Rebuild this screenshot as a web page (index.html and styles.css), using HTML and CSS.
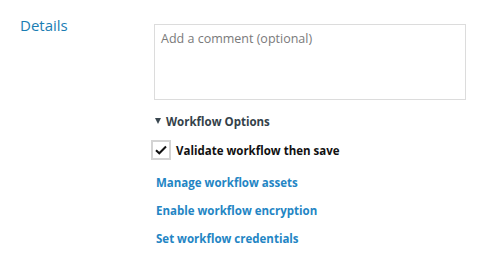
FILE: index.html
```html
<!DOCTYPE html>
<html>
<head>
<meta charset="utf-8">
<link rel="stylesheet" href="styles.css">
</head>
<body>
<div class="row">
  <div class="label">Details</div>
  <div class="content">
    <div class="comment">Add a comment (optional)</div>
    <div class="options">
      <div class="options-head"><span class="tri"></span>Workflow Options</div>
      <label class="check">
        <span class="box"><svg width="12" height="10" viewBox="0 0 12 10"><path d="M1 5.2 L4.3 8.3 L11 1.5" fill="none" stroke="#111" stroke-width="2"/></svg></span>
        <span class="check-text">Validate workflow then save</span>
      </label>
      <a class="link" href="#">Manage workflow assets</a>
      <a class="link" href="#">Enable workflow encryption</a>
      <a class="link" href="#">Set workflow credentials</a>
    </div>
  </div>
</div>
</body>
</html>
```
FILE: styles.css
```css
html, body { margin: 0; padding: 0; background: #fff; }
body { font-family: "Open Sans", "Noto Sans", sans-serif; }
.row { display: flex; padding: 15px 0 0 20px; }
.label { width: 134px; font-size: 15px; color: #1a7db3; line-height: 20px; }
.content { display: flex; flex-direction: column; padding-top: 9px; }
.comment { width: 298px; height: 62px; border: 1px solid #dcdcdc; padding: 6px 6px 6px 6px;
  font-size: 12.5px; color: #7a7a7a; line-height: 16px; }
.options { display: flex; flex-direction: column; padding-top: 12px; }
.options-head { display: flex; align-items: center; font-size: 11.5px; font-weight: 700; color: #344149; height: 18px; padding-left: 1px; }
.tri { width: 0; height: 0; border-left: 3.5px solid transparent; border-right: 3.5px solid transparent; border-top: 6px solid #3a4750; margin-right: 5px; }
.check { display: flex; align-items: center; margin-top: 10px; margin-left: -3px; }
.box { width: 16px; height: 16px; border: 2px solid #d4d4d4; display: flex; align-items: center; justify-content: center; margin-right: 5px; }
.check-text { font-size: 11.5px; font-weight: 700; color: #111; }
.link { font-size: 11.5px; font-weight: 700; color: #2385c4; text-decoration: none; line-height: 18px; margin-top: 10px; padding-left: 2px; }
.check + .link { margin-top: 14px; }
```
